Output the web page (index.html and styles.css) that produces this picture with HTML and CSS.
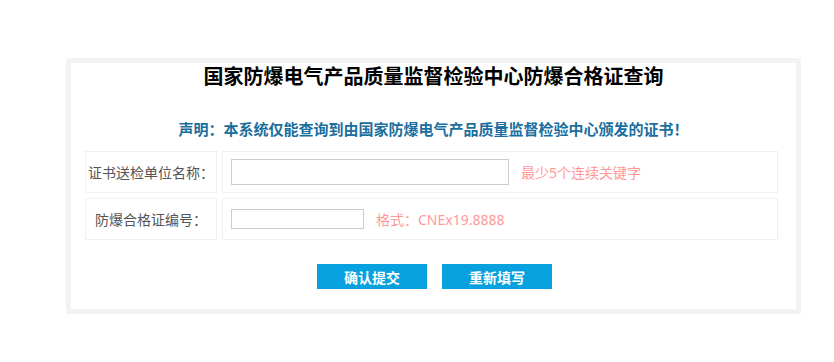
FILE: index.html
```html
<!DOCTYPE html>
<html lang="zh-CN">
<head>
<meta charset="utf-8">
<title>防爆合格证查询</title>
<link rel="stylesheet" href="styles.css">
</head>
<body>
<div class="panel">
  <h1 class="title">国家防爆电气产品质量监督检验中心防爆合格证查询</h1>
  <p class="notice">声明：本系统仅能查询到由国家防爆电气产品质量监督检验中心颁发的证书！</p>
  <div class="form">
    <div class="label">证书送检单位名称：</div>
    <div class="value">
      <input class="field field-wide" type="text">
      <span class="hint">最少5个连续关键字</span>
    </div>
    <div class="label">防爆合格证编号：</div>
    <div class="value">
      <input class="field field-short" type="text">
      <span class="hint">格式：CNEx19.8888</span>
    </div>
  </div>
  <div class="actions">
    <button class="btn" type="button">确认提交</button>
    <button class="btn" type="button">重新填写</button>
  </div>
</div>
</body>
</html>
```

FILE: styles.css
```css
html, body {
  margin: 0;
  padding: 0;
  background: #fff;
  font-family: "Noto Sans", "Noto Sans CJK SC", sans-serif;
}
.panel {
  box-sizing: border-box;
  width: 735px;
  height: 256px;
  margin: 58px 0 0 66px;
  border: 5px solid #f3f3f3;
  background: #fff;
}
.title {
  margin: 0;
  font-size: 20px;
  line-height: 26px;
  font-weight: bold;
  color: #000;
  text-align: center;
  font-family: "Noto Sans CJK SC", sans-serif;
}
.notice {
  margin: 30px 0 0;
  font-size: 15px;
  line-height: 20px;
  font-weight: bold;
  color: #1a6e9e;
  text-align: center;
  font-family: "Noto Sans CJK SC", sans-serif;
}
.form {
  display: grid;
  grid-template-columns: 132px 556px;
  grid-auto-rows: 42px;
  gap: 5px;
  margin: 12px 0 0 14px;
}
.label, .value {
  box-sizing: border-box;
  border: 1px solid #f0f0f0;
  font-size: 14px;
  color: #555;
}
.label {
  display: flex;
  align-items: center;
  justify-content: center;
  white-space: nowrap;
}
.value {
  display: flex;
  align-items: center;
  padding-left: 8px;
  gap: 12px;
}
.field {
  box-sizing: border-box;
  margin: 0;
  padding: 0 4px;
  border: 1px solid #cccccc;
  background: #fff;
  outline: none;
}
.field-wide {
  width: 278px;
  height: 26px;
}
.field-short {
  width: 133px;
  height: 20px;
}
.hint {
  font-size: 14px;
  color: #ff9999;
}
.actions {
  display: flex;
  justify-content: center;
  gap: 15px;
  margin-top: 24px;
  padding-left: 2px;
}
.btn {
  width: 110px;
  height: 25px;
  margin: 0;
  padding: 0;
  border: none;
  background: #08a1e0;
  color: #fff;
  font-size: 14px;
  font-weight: bold;
  font-family: "Noto Sans CJK SC", sans-serif;
  cursor: pointer;
}
```
